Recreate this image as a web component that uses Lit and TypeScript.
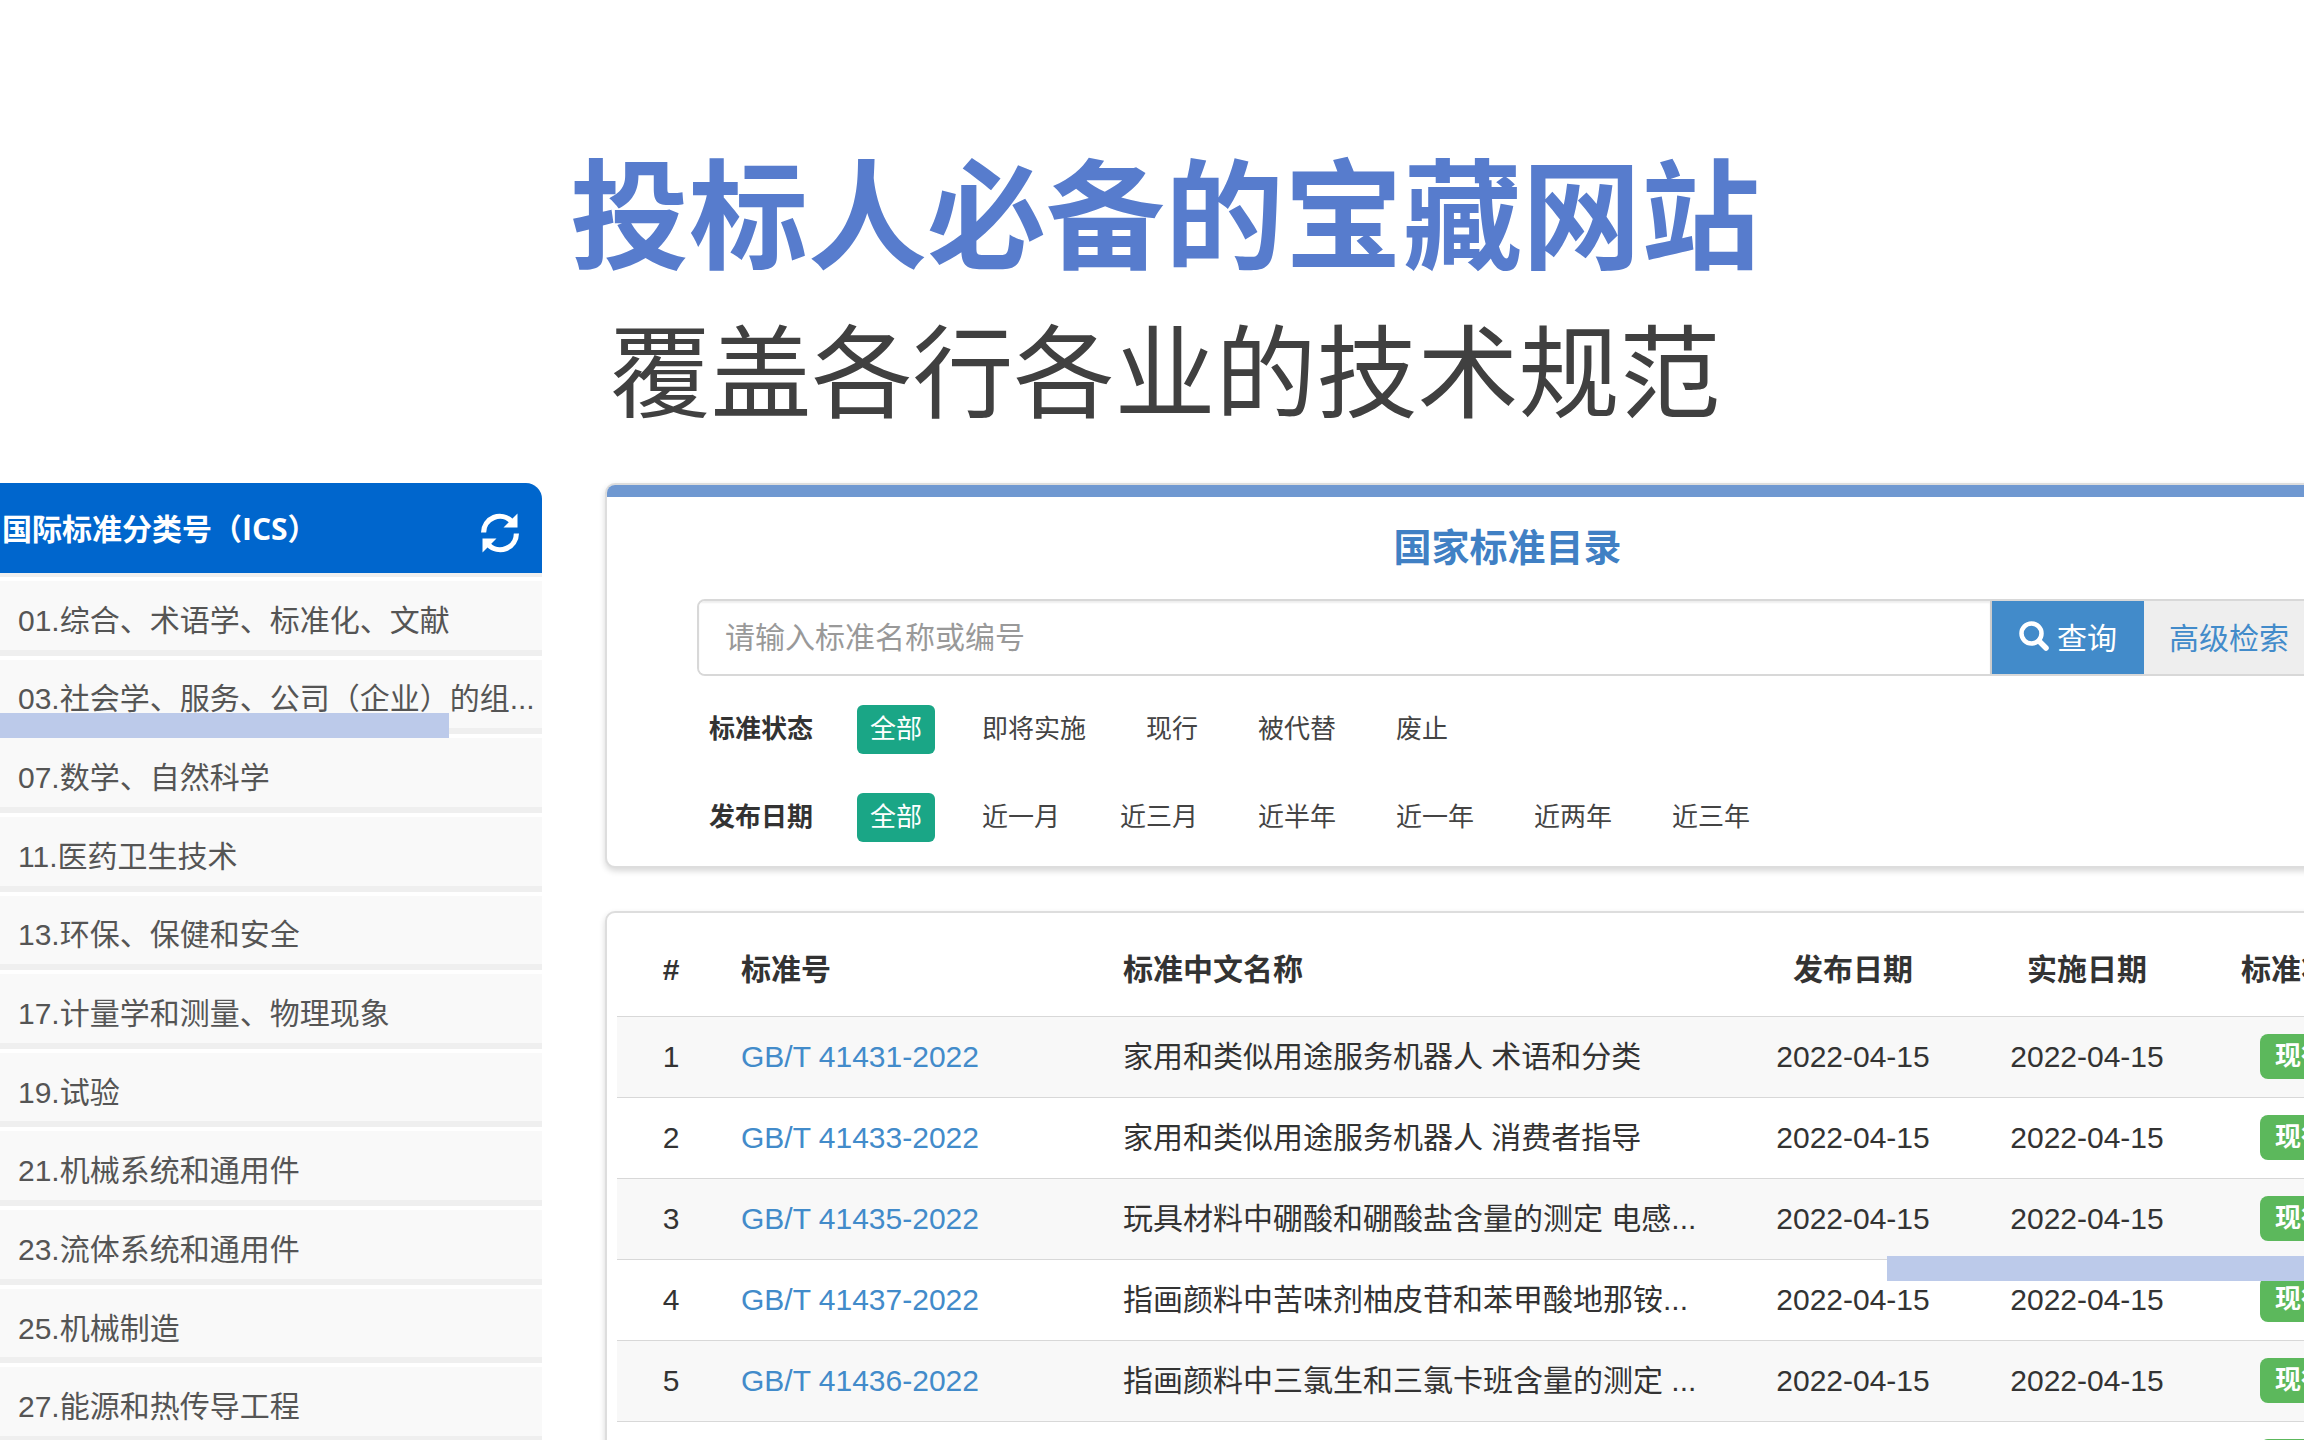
import { LitElement, html, css, nothing } from "lit";
import { customElement } from "lit/decorators.js";

interface Standard {
  no?: string;
  code?: string;
  name?: string;
  issued?: string;
  effective?: string;
}

const CATEGORIES = [
  "01.综合、术语学、标准化、文献",
  "03.社会学、服务、公司（企业）的组...",
  "07.数学、自然科学",
  "11.医药卫生技术",
  "13.环保、保健和安全",
  "17.计量学和测量、物理现象",
  "19.试验",
  "21.机械系统和通用件",
  "23.流体系统和通用件",
  "25.机械制造",
  "27.能源和热传导工程",
];

const FILTERS = [
  { label: "标准状态", options: ["全部", "即将实施", "现行", "被代替", "废止"] },
  { label: "发布日期", options: ["全部", "近一月", "近三月", "近半年", "近一年", "近两年", "近三年"] },
];

const DAY = "2022-04-15";

const STANDARDS: Standard[] = [
  { no: "1", code: "GB/T 41431-2022", name: "家用和类似用途服务机器人 术语和分类", issued: DAY, effective: DAY },
  { no: "2", code: "GB/T 41433-2022", name: "家用和类似用途服务机器人 消费者指导", issued: DAY, effective: DAY },
  { no: "3", code: "GB/T 41435-2022", name: "玩具材料中硼酸和硼酸盐含量的测定 电感...", issued: DAY, effective: DAY },
  { no: "4", code: "GB/T 41437-2022", name: "指画颜料中苦味剂柚皮苷和苯甲酸地那铵...", issued: DAY, effective: DAY },
  { no: "5", code: "GB/T 41436-2022", name: "指画颜料中三氯生和三氯卡班含量的测定 ...", issued: DAY, effective: DAY },
  {},
];

@customElement("app-root")
export class AppRoot extends LitElement {
  static styles = css`
    :host {
      display: block;
      font-family: "Liberation Sans", "Noto Sans CJK SC", sans-serif;
      font-size: 30px;
      color: #333;
    }
    * {
      box-sizing: border-box;
    }
    a {
      color: inherit;
      text-decoration: none;
    }
    button,
    input {
      font: inherit;
      margin: 0;
    }
    .page {
      position: relative;
      display: flex;
      flex-direction: column;
      height: 100vh;
      overflow: hidden;
      background: #fff;
    }
    .hero {
      padding: 128px 0 38px 26px;
      text-align: center;
      font-family: "Noto Sans CJK SC", sans-serif;
    }
    .hero-title {
      margin: 0;
      font-size: 119px;
      font-weight: 700;
      line-height: 160px;
      color: #577ccd;
    }
    .hero-sub {
      margin: 0;
      font-size: 101px;
      font-weight: 400;
      line-height: 157px;
      color: #404040;
    }
    .body {
      flex: 1;
      min-height: 0;
      display: grid;
      grid-template-columns: 542px minmax(0, 1fr);
      grid-template-rows: minmax(0, 1fr);
      column-gap: 63px;
      margin-right: -106px;
    }

    .side {
      display: flex;
      flex-direction: column;
      min-height: 0;
    }
    .side-head {
      flex: none;
      display: flex;
      align-items: center;
      justify-content: space-between;
      height: 90px;
      margin-bottom: -2px;
      padding: 2px 22px 0 2px;
      border-radius: 0 16px 0 0;
      background: #0066cd;
      color: #fff;
      position: relative;
    }
    .side-title {
      margin: 0;
      font-family: "Open Sans", "Noto Sans CJK SC", sans-serif;
      font-size: 30px;
      line-height: 40px;
      font-weight: 700;
    }
    .icon-button {
      display: flex;
      padding: 8px 0 0;
      border: 0;
      background: none;
      color: inherit;
    }
    .refresh {
      width: 40px;
      height: 40px;
    }
    .cats {
      flex: 1;
      display: grid;
      grid-auto-rows: minmax(min-content, 1fr);
      margin: 0;
      padding: 0;
      list-style: none;
      border-bottom: 4px solid #efefef;
      color: #555;
    }
    .cat {
      display: flex;
      align-items: center;
      padding: 9px 0 0 18px;
      border-top: 6px solid #efefef;
      background: linear-gradient(#fff 4px, #f9f9f9 4px);
      white-space: nowrap;
    }

    .main {
      display: flex;
      flex-direction: column;
      gap: 43px;
      min-width: 0;
    }
    .card {
      flex: none;
      border: 2px solid #ddd;
      border-radius: 10px;
      background: #fff;
      box-shadow: 0 3px 6px rgba(0, 0, 0, 0.16);
    }
    .search-card {
      overflow: hidden;
      padding-bottom: 24px;
    }
    .stripe {
      height: 12px;
      background: #6f98d1;
    }
    .search-title {
      margin: 0;
      padding: 22px 0;
      text-align: center;
      font-size: 38px;
      line-height: 58px;
      font-weight: 700;
      color: #4080c4;
    }
    .search {
      display: flex;
      height: 77px;
      margin: 0 90px 29px;
      border: 2px solid #d8d8d8;
      border-radius: 8px;
      overflow: hidden;
    }
    .search-input {
      flex: 1;
      min-width: 0;
      padding: 0 26px;
      border: 0;
      border-right: 2px solid #ccc;
      background: #fff;
      box-shadow: inset 0 2px 2px rgba(0, 0, 0, 0.07);
      color: #333;
    }
    .search-input::placeholder {
      color: #999;
      opacity: 1;
    }
    .search-button {
      display: flex;
      align-items: center;
      justify-content: center;
      gap: 8px;
      width: 152px;
      padding: 0 0 4px;
      border: 0;
      background: #428bca;
      color: #fff;
    }
    .search-icon {
      width: 30px;
      height: 30px;
    }
    .advanced {
      display: flex;
      align-items: center;
      justify-content: center;
      width: 172px;
      background: #eee;
      color: #428bca;
      padding: 0 2px 4px 0;
    }
    .filters {
      display: grid;
      row-gap: 39px;
      padding-left: 102px;
    }
    .filter {
      display: flex;
      align-items: center;
      font-size: 26px;
      line-height: 49px;
    }
    .filter-label {
      width: 148px;
      font-weight: 700;
    }
    .options {
      display: flex;
      gap: 34px;
    }
    .option {
      padding: 0 13px;
      border: 0;
      border-radius: 6px;
      background: none;
      color: #444;
      line-height: 49px;
    }
    .option.on {
      background: #1aa686;
      color: #fff;
    }

    .table-card {
      padding: 0 10px;
    }
    .standards {
      width: 100%;
      table-layout: fixed;
      border-collapse: collapse;
    }
    .standards th,
    .standards td {
      padding: 0 16px;
      border-bottom: 1px solid #d8d8d8;
      text-align: left;
      white-space: nowrap;
      line-height: 40px;
    }
    .standards th {
      height: 103px;
      padding-top: 12px;
    }
    .standards td {
      height: 81px;
    }
    .standards tbody tr:nth-child(odd) {
      background: #f8f8f8;
    }
    .standards .mid {
      text-align: center;
    }
    .w-no {
      width: 108px;
    }
    .w-code {
      width: 382px;
    }
    .w-date {
      width: 234px;
    }
    .w-state {
      width: 194px;
    }
    .code {
      color: #428bca;
    }
    .badge {
      display: inline-block;
      padding: 0 15px;
      border-radius: 8px;
      background: #5cb85c;
      color: #fff;
      font-size: 26px;
      font-weight: 700;
      line-height: 45px;
      vertical-align: middle;
    }

    .bar {
      position: absolute;
      height: 25px;
      background: #bccaea;
    }
    .bar-left {
      left: 0;
      top: 713px;
      width: 449px;
    }
    .bar-right {
      right: 0;
      top: 1256px;
      width: 417px;
    }
  `;

  private renderRow(s: Standard) {
    return html`<tr>
      <td class="mid">${s.no ?? nothing}</td>
      <td>${s.code ? html`<a class="code" href="#">${s.code}</a>` : nothing}</td>
      <td>${s.name ?? nothing}</td>
      <td class="mid">${s.issued ?? nothing}</td>
      <td class="mid">${s.effective ?? nothing}</td>
      <td class="mid"><span class="badge">现行</span></td>
    </tr>`;
  }

  render() {
    return html`
      <div class="page">
        <header class="hero">
          <h1 class="hero-title">投标人必备的宝藏网站</h1>
          <p class="hero-sub">覆盖各行各业的技术规范</p>
        </header>
        <div class="body">
          <aside class="side">
            <div class="side-head">
              <h2 class="side-title">国际标准分类号（ICS）</h2>
              <button class="icon-button" type="button" aria-label="刷新">
                <svg class="refresh" viewBox="0 0 40 40" fill="none" stroke="currentColor" stroke-width="5.2">
                  <path d="M3.6 19.5A16.2 16.2 0 0 1 31.500 8.300" />
                  <path d="M36.400 20.5A16.2 16.2 0 0 1 8.500 31.700" />
                  <path d="M37.500 0.500V14.500H23.500Z" fill="currentColor" stroke="none" />
                  <path d="M2.500 39.500V25.500H16.500Z" fill="currentColor" stroke="none" />
                </svg>
              </button>
            </div>
            <ul class="cats">
              ${CATEGORIES.map((c) => html`<li class="cat"><a href="#">${c}</a></li>`)}
            </ul>
          </aside>
          <main class="main">
            <section class="card search-card">
              <div class="stripe"></div>
              <h2 class="search-title">国家标准目录</h2>
              <form class="search" @submit=${(e: Event) => e.preventDefault()}>
                <input class="search-input" type="text" aria-label="标准名称或编号" placeholder="请输入标准名称或编号" />
                <button class="search-button" type="submit">
                  <svg class="search-icon" viewBox="0 0 30 30" fill="none" stroke="currentColor">
                    <circle cx="12.500" cy="12.500" r="10" stroke-width="4.500" />
                    <path d="M20 20L27 27" stroke-width="5.500" stroke-linecap="round" />
                  </svg>
                  <span>查询</span>
                </button>
                <a class="advanced" href="#">高级检索</a>
              </form>
              <div class="filters">
                ${FILTERS.map(
                  (f) => html`<div class="filter" role="group" aria-label=${f.label}>
                    <span class="filter-label">${f.label}</span>
                    <div class="options">
                      ${f.options.map(
                        (o, i) => html`<button type="button" class=${i === 0 ? "option on" : "option"}>${o}</button>`
                      )}
                    </div>
                  </div>`
                )}
              </div>
            </section>
            <section class="card table-card">
              <table class="standards">
                <colgroup>
                  <col class="w-no" />
                  <col class="w-code" />
                  <col />
                  <col class="w-date" />
                  <col class="w-date" />
                  <col class="w-state" />
                </colgroup>
                <thead>
                  <tr>
                    <th class="mid" scope="col">#</th>
                    <th scope="col">标准号</th>
                    <th scope="col">标准中文名称</th>
                    <th class="mid" scope="col">发布日期</th>
                    <th class="mid" scope="col">实施日期</th>
                    <th class="mid" scope="col">标准状态</th>
                  </tr>
                </thead>
                <tbody>
                  ${STANDARDS.map((s) => this.renderRow(s))}
                </tbody>
              </table>
            </section>
          </main>
        </div>
        <div class="bar bar-left"></div>
        <div class="bar bar-right"></div>
      </div>
    `;
  }
}
